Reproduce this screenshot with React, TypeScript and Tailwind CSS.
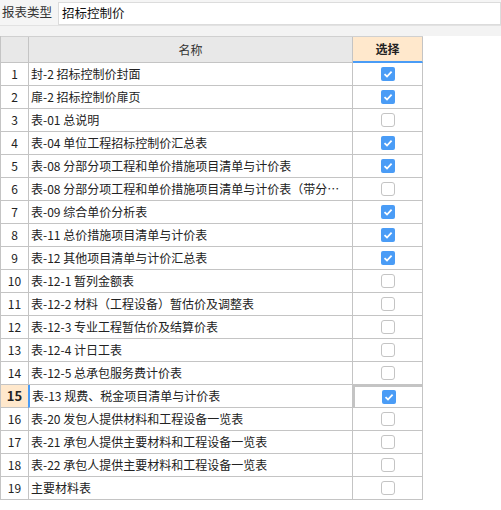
import React from "react";

const rows: [string, boolean][] = [
  ["封-2 招标控制价封面", true],
  ["扉-2 招标控制价扉页", true],
  ["表-01 总说明", false],
  ["表-04 单位工程招标控制价汇总表", true],
  ["表-08 分部分项工程和单价措施项目清单与计价表", true],
  ["表-08 分部分项工程和单价措施项目清单与计价表（带分部小计）", false],
  ["表-09 综合单价分析表", true],
  ["表-11 总价措施项目清单与计价表", true],
  ["表-12 其他项目清单与计价汇总表", true],
  ["表-12-1 暂列金额表", false],
  ["表-12-2 材料（工程设备）暂估价及调整表", false],
  ["表-12-3 专业工程暂估价及结算价表", false],
  ["表-12-4 计日工表", false],
  ["表-12-5 总承包服务费计价表", false],
  ["表-13 规费、税金项目清单与计价表", true],
  ["表-20 发包人提供材料和工程设备一览表", false],
  ["表-21 承包人提供主要材料和工程设备一览表", false],
  ["表-22 承包人提供主要材料和工程设备一览表", false],
  ["主要材料表", false],
];

function Box({ checked }: { checked: boolean }) {
  if (checked) {
    return (
      <div className="w-[14px] h-[14px] rounded-[2px] bg-[#4a9cf6] flex items-center justify-center">
        <svg width="10" height="10" viewBox="0 0 10 10">
          <path d="M1.5 5.2 L4 7.5 L8.6 2.6" stroke="#fff" strokeWidth="1.8" fill="none" />
        </svg>
      </div>
    );
  }
  return <div className="w-[14px] h-[14px] rounded-[3px] border border-[#c4c4c4] bg-white" />;
}

export default function App() {
  return (
    <div className="w-[501px] h-[510px] bg-white text-[12px] text-[#222] font-['Noto_Sans_CJK_SC',sans-serif] overflow-hidden">
      <div className="flex h-[25px] bg-[#f5f5f5] items-center">
        <span className="pl-[2px] pr-[6px] text-[12.5px] text-[#333]">报表类型</span>
        <div className="flex-1 h-[23px] mt-[1px] bg-white border border-[#dcdcdc] flex items-center pl-[3px] text-[12.5px] text-[#111]">
          招标控制价
        </div>
      </div>
      <div className="h-[11px] bg-[#f3f3f3] border-t border-[#e2e2e2]" />
      <div className="w-[423px] border-l border-[#c4c4c4]">
        <div className="flex h-[27px] bg-[#e8e8e8] border-t border-[#d0d0d0]">
          <div className="w-[28px] border-r border-b border-[#c4c4c4]" />
          <div className="w-[324px] border-r border-b border-[#c4c4c4] flex items-center justify-center text-[#333]">名称</div>
          <div className="w-[70px] bg-[#ffe8cc] border-r border-[#c4c4c4] border-b-2 border-b-[#4a9cf6] flex items-center justify-center font-bold text-[#222]">选择</div>
        </div>
        {rows.map(([name, checked], i) => {
          const sel = i === 14;
          return (
            <div key={i} className="flex h-[23px]">
              <div
                className={`w-[28px] border-r border-b border-[#c4c4c4] flex items-center justify-center ${
                  sel ? "bg-[#ffe8cc] font-bold text-[13px]" : ""
                }`}
              >
                {i + 1}
              </div>
              <div
                className={`w-[324px] border-r border-b border-[#c4c4c4] flex items-center pl-[2px] pr-[4px] ${
                  sel ? "border-l-2 border-l-[#4a9cf6] -ml-[1px] w-[325px]" : ""
                }`}
              >
                <span className="truncate">{name}</span>
              </div>
              <div
                className={`w-[70px] border-r border-b border-[#c4c4c4] flex items-center justify-center ${
                  sel ? "border-2 border-[#808080]" : ""
                }`}
              >
                <Box checked={checked} />
              </div>
            </div>
          );
        })}
      </div>
    </div>
  );
}
